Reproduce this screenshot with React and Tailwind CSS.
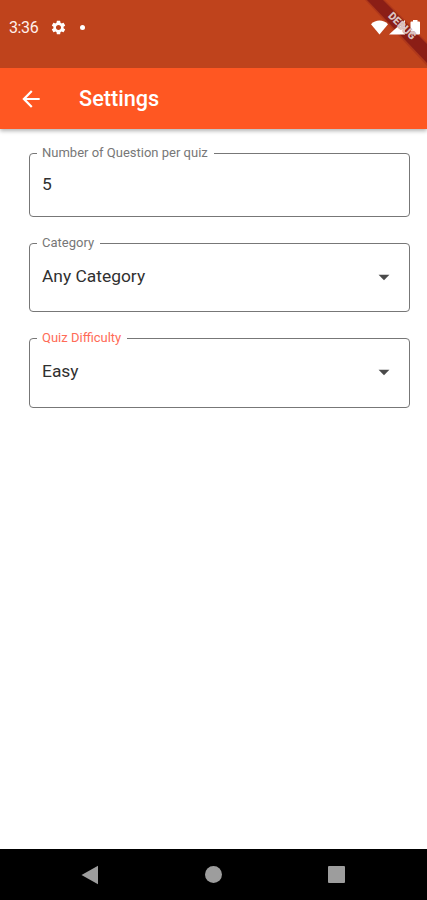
import { useState } from 'react';
import { MdArrowBack, MdArrowDropDown, MdSettings } from 'react-icons/md';

const FIELDS = [
  { name: 'count', label: 'Number of Question per quiz', size: 'h-[73px] mb-[17px]', valueSize: 'h-[44px]' },
  { name: 'category', label: 'Category', size: 'h-[78px] mb-[17px]', valueSize: 'h-[49px]', select: true },
  { name: 'difficulty', label: 'Quiz Difficulty', size: 'h-[79px]', valueSize: 'h-[49px]', select: true },
];

// Ribbon with a faint shadow along both edges.
function DebugBand() {
  return (
    <svg className="absolute right-0 top-0" width="66" height="68" viewBox="0 0 66 68">
      <path d="M4 0H24L66 42V66Z" fill="#7f1616" fillOpacity="0.25" />
      <path d="M6 0H22L66 44V63Z" fill="#7f1616" fillOpacity="0.75" />
    </svg>
  );
}

function DebugLabel() {
  return (
    <svg className="absolute right-0 top-0" width="62" height="66" viewBox="0 0 62 66">
      <text
        transform="translate(37 26) rotate(45)"
        textAnchor="middle"
        dominantBaseline="central"
        textLength="34"
        lengthAdjust="spacingAndGlyphs"
        className="fill-[#dcc4c1] stroke-[#7f1616]/40 stroke-1 font-['Roboto',sans-serif] text-[11px] font-black [paint-order:stroke]"
      >
        DEBUG
      </text>
    </svg>
  );
}

function StatusBar() {
  return (
    <div className="relative h-[68px] bg-[#bf431c] text-white">
      <DebugBand />
      <div className="relative flex h-[54px] items-center pl-[9px] pr-[7px]">
        <span className="w-[41px] pt-[2px] text-[16px] tracking-[-0.4px] text-[#fff0ec]">3:36</span>
        <MdSettings size={17} className="shrink-0" />
        <span className="ml-[13px] size-[5px] rounded-full bg-white" />
        <svg className="ml-auto" width="49" height="15" viewBox="0 0 49 15" fill="currentColor">
          <path d="M0 4.200C4.500-.7 12.500-.7 17 4.200L8.500 14.500Z" />
          <path d="M18 14.500L34 0V14.500Z" />
          <path d="M39.500 2.500Q39.500 1.500 40.500 1.500H42V0H46.500V1.500H48Q49 1.500 49 2.500V13.500Q49 14.500 48 14.500H40.500Q39.500 14.500 39.500 13.500Z" />
        </svg>
      </div>
      <DebugLabel />
    </div>
  );
}

function Field({ field, value, active }) {
  return (
    <fieldset className={`rounded-[4px] border border-[#777] px-[7px] ${field.size}`}>
      <legend className={`pl-[5px] pr-[6px] text-[13px] leading-[18px] ${active ? 'text-[#ff6b57]' : 'text-[#777]'}`}>
        {field.label}
      </legend>
      <div className={`flex items-center justify-between px-[5px] text-[17.4px] text-[#303030] ${field.valueSize}`}>
        <span>{value}</span>
        {field.select && <MdArrowDropDown size={26} className="text-[#4a4a4a]" />}
      </div>
    </fieldset>
  );
}

function NavigationBar() {
  return (
    <nav className="flex h-[51px] items-center justify-between bg-black pl-[81px] pr-[82px] text-[#9d9d9d]">
      <svg width="18" height="20" viewBox="0 0 18 20" fill="currentColor">
        <path d="M.5 10L17 .8V19.200Z" />
      </svg>
      <span className="size-[17px] rounded-full bg-current" />
      <span className="size-[17px] rounded-[1px] bg-current" />
    </nav>
  );
}

export default function App() {
  const [values] = useState({ count: '5', category: 'Any Category', difficulty: 'Easy' });

  return (
    <div className="flex h-[900px] w-[427px] flex-col overflow-hidden bg-white font-['Roboto',sans-serif]">
      <StatusBar />
      <header className="flex h-[61px] shrink-0 items-center bg-[#ff5722] pl-[18px] text-white shadow-[0_2px_4px_rgba(0,0,0,0.3)]">
        <MdArrowBack size={26} />
        <h1 className="ml-[35px] pt-[2px] text-[21.7px] font-medium">Settings</h1>
      </header>

      <main className="flex-1 pl-[29px] pr-[17px] pt-[15px]">
        {FIELDS.map((field) => (
          <Field key={field.name} field={field} value={values[field.name]} active={field.name === 'difficulty'} />
        ))}
      </main>

      <NavigationBar />
    </div>
  );
}
